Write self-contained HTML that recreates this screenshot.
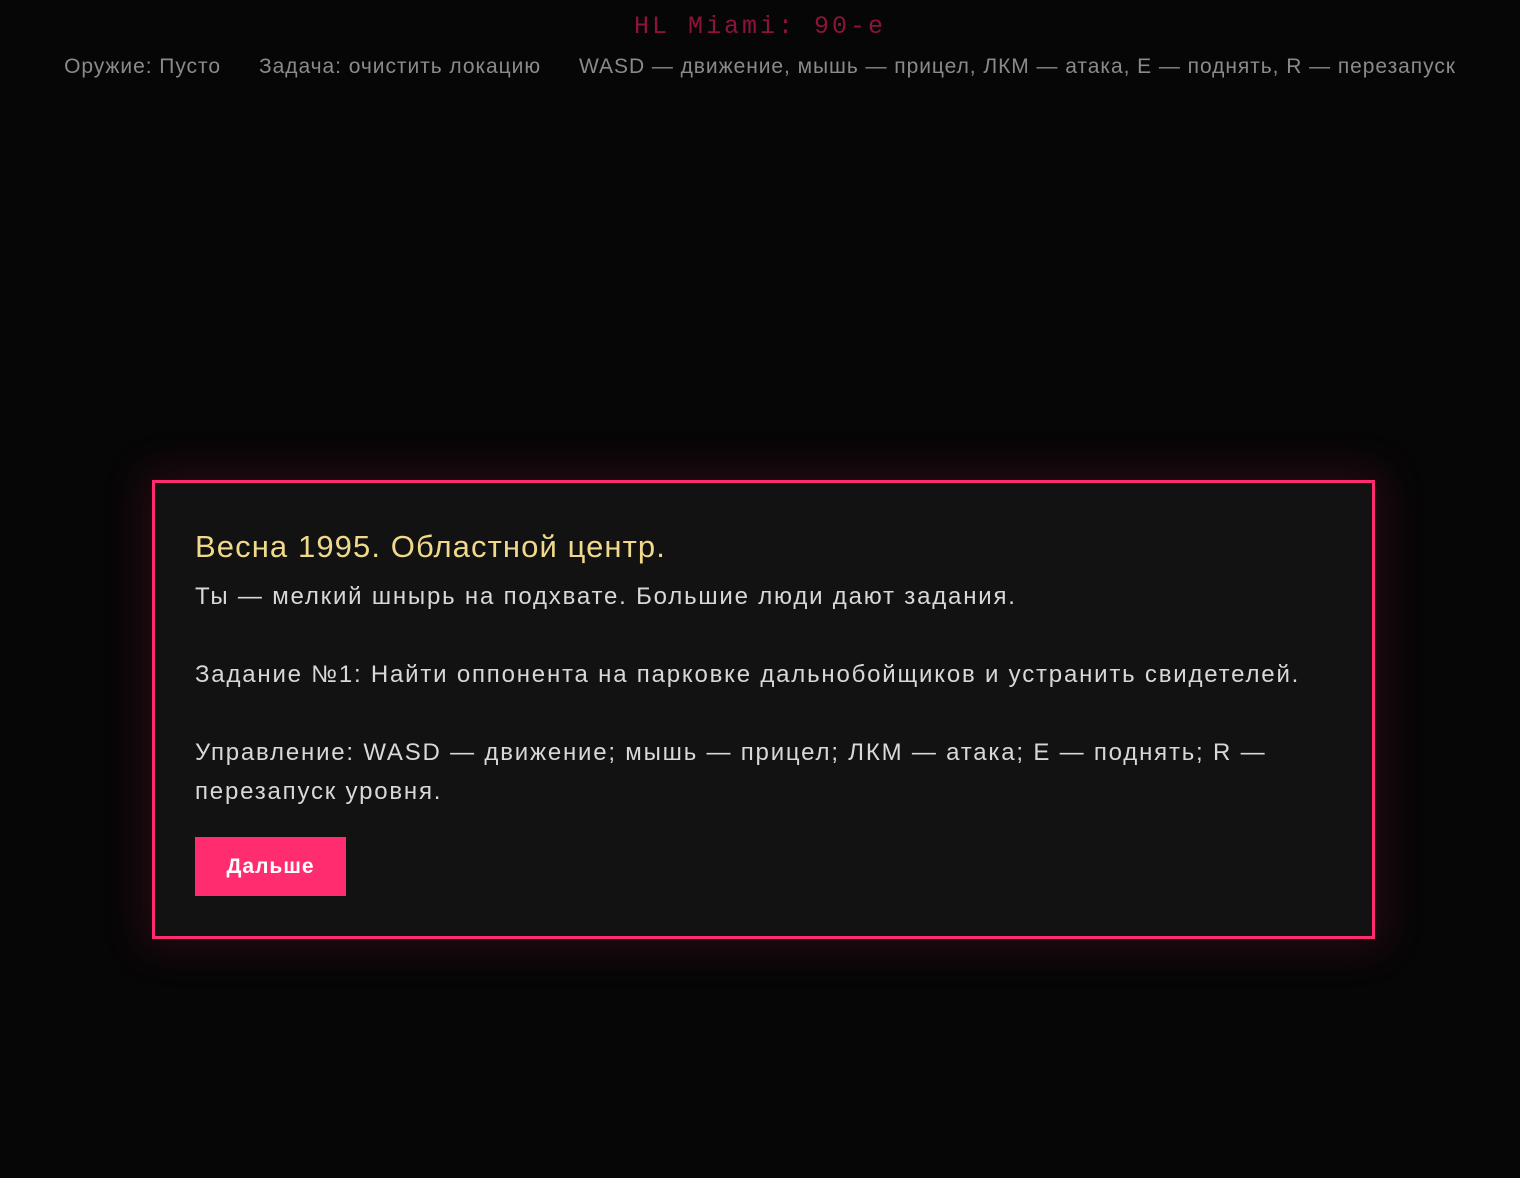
<!DOCTYPE html>
<html><head><meta charset="utf-8"><style>
html,body{margin:0;padding:0;width:1520px;height:1178px;background:#060606;overflow:hidden;font-family:"Liberation Sans",sans-serif}
.title{position:absolute;top:10px;left:0;width:1520px;text-align:center;color:#8c1439;font-family:"Liberation Mono",monospace;font-size:25px;letter-spacing:3px;line-height:34px}
.hud{position:absolute;top:54px;left:0;width:1520px;text-align:center;color:#8a8a8a;font-size:21px;line-height:26px;letter-spacing:0.95px}
.hud span{margin:0 19px}
.box{position:absolute;left:152px;top:480px;width:1217px;height:453px;border:3px solid #ff2d6f;background:#121212;box-shadow:0 0 40px 10px rgba(255,45,111,0.13)}
.in{position:absolute;left:40px;top:44px;right:20px}
h1{margin:0;color:#f0d98a;font-weight:normal;font-size:31px;line-height:40px;letter-spacing:1.1px}
p{margin:0 0 39px;color:#d8d8d8;font-size:24px;line-height:39px;letter-spacing:1.8px}
.p1{margin-top:10px}
.btn{position:absolute;left:40px;top:354px;width:151px;height:59px;background:#ff2d6f;color:#fff;font-weight:bold;font-size:21px;line-height:59px;text-align:center;letter-spacing:1px}
</style></head><body>
<div class="title">HL Miami: 90-е</div>
<div class="hud"><span>Оружие: Пусто</span><span>Задача: очистить локацию</span><span>WASD — движение, мышь — прицел, ЛКМ — атака, E — поднять, R — перезапуск</span></div>
<div class="box"><div class="in">
<h1>Весна 1995. Областной центр.</h1>
<p class="p1">Ты — мелкий шнырь на подхвате. Большие люди дают задания.</p>
<p>Задание №1: Найти оппонента на парковке дальнобойщиков и устранить свидетелей.</p>
<p>Управление: WASD — движение; мышь — прицел; ЛКМ — атака; E — поднять; R —<br>перезапуск уровня.</p>
</div>
<div class="btn">Дальше</div>
</div>
</body></html>
